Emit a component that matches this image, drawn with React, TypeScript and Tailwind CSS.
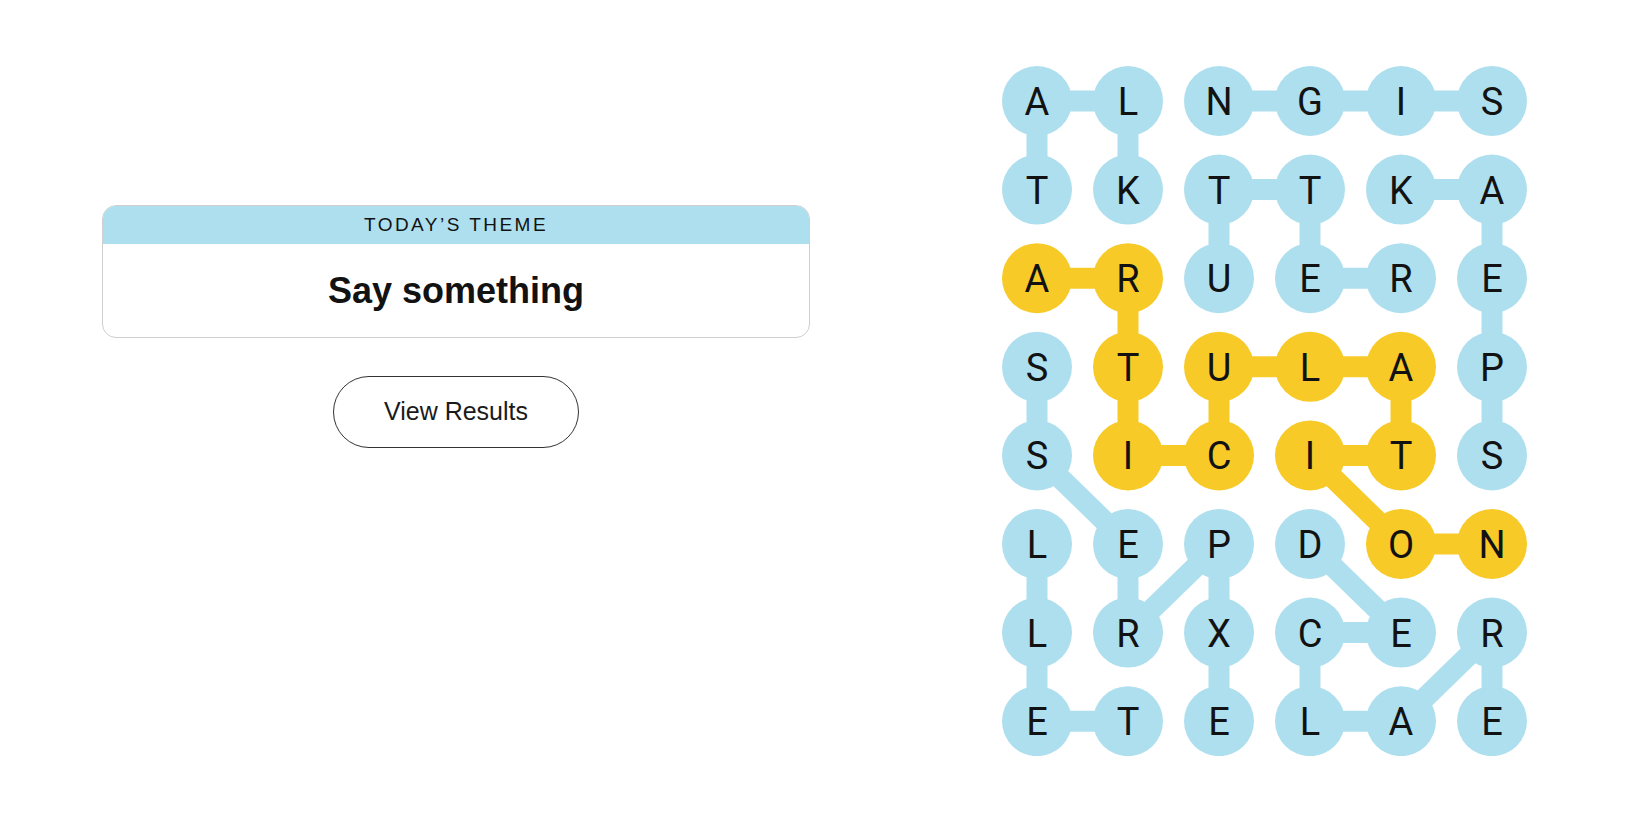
import React from 'react';

const BLUE = '#aedfee';
const YELLOW = '#f7ca28';

const GRID = [
 'ALNGIS',
 'TKTTKA',
 'ARUERE',
 'STULAP',
 'SICITS',
 'LEPDON',
 'LRXCER',
 'ETELAE',
];

type Cell = [number, number];

// each word is a path of [row, col] cells
const WORDS: { cells: Cell[]; spangram?: boolean }[] = [
 { cells: [[1, 0], [0, 0], [0, 1], [1, 1]] }, // TALK
 { cells: [[0, 5], [0, 4], [0, 3], [0, 2]] }, // SIGN
 { cells: [[2, 2], [1, 2], [1, 3], [2, 3], [2, 4]] }, // UTTER
 { cells: [[4, 5], [3, 5], [2, 5], [1, 5], [1, 4]] }, // SPEAK
 { cells: [[7, 1], [7, 0], [6, 0], [5, 0]] }, // TELL
 { cells: [[7, 2], [6, 2], [5, 2], [6, 1], [5, 1], [4, 0], [3, 0]] }, // EXPRESS
 { cells: [[5, 3], [6, 4], [6, 3], [7, 3], [7, 4], [6, 5], [7, 5]] }, // DECLARE
 {
  cells: [[2, 0], [2, 1], [3, 1], [4, 1], [4, 2], [3, 2], [3, 3], [3, 4], [4, 4], [4, 3], [5, 4], [5, 5]],
  spangram: true,
 }, // ARTICULATION
];

const R = 35;
const DX = 91;
const DY = 88.6;
const cx = (c: number) => R + c * DX;
const cy = (r: number) => R + r * DY;

const colorOf = (r: number, c: number) =>
 WORDS.some((w) => w.spangram && w.cells.some(([a, b]) => a === r && b === c)) ? YELLOW : BLUE;

const Board = () => {
 const width = R * 2 + DX * 5;
 const height = R * 2 + DY * 7;
 return (
  <svg width={width} height={height} viewBox={`0 0 ${width} ${height}`} className="block">
   {WORDS.map((w, i) =>
    w.cells.slice(1).map(([r, c], j) => {
     const [pr, pc] = w.cells[j];
     return (
      <line
       key={`${i}-${j}`}
       x1={cx(pc)}
       y1={cy(pr)}
       x2={cx(c)}
       y2={cy(r)}
       stroke={w.spangram ? YELLOW : BLUE}
       strokeWidth={21}
      />
     );
    })
   )}
   {GRID.map((row, r) =>
    row.split('').map((ch, c) => (
     <g key={`${r}-${c}`}>
      <circle cx={cx(c)} cy={cy(r)} r={R} fill={colorOf(r, c)} />
      <text
       x={cx(c)}
       y={cy(r) + 14}
       textAnchor="middle"
       fontSize={38}
       fill="#121212"
       style={{ fontFamily: '"Liberation Sans Narrow", Roboto, sans-serif' }}
      >
       {ch}
      </text>
     </g>
    ))
   )}
  </svg>
 );
};

export default function App() {
 return (
  <div className="flex h-[825px] w-[1650px] bg-white font-['Liberation_Sans',Arial,sans-serif] text-[#121212]">
   <div className="w-[1002px] shrink-0 pl-[102px] pt-[205px]">
    <div className="w-[708px] overflow-hidden rounded-[14px] border border-[#cfcfcf]">
     <div className="flex h-[38px] items-center justify-center bg-[#aedfee] text-[19px] uppercase tracking-[0.13em]">
      Today’s Theme
     </div>
     <div className="flex h-[93px] items-center justify-center text-[36px] font-bold">
      Say something
     </div>
    </div>
    <div className="flex w-[708px] justify-center pt-[38px]">
     <button
      type="button"
      className="flex h-[72px] w-[246px] items-center justify-center rounded-full border border-[#333] bg-white text-[25px] text-[#1a1a1a]"
     >
      View Results
     </button>
    </div>
   </div>
   <div className="pt-[66px]">
    <Board />
   </div>
  </div>
 );
}
